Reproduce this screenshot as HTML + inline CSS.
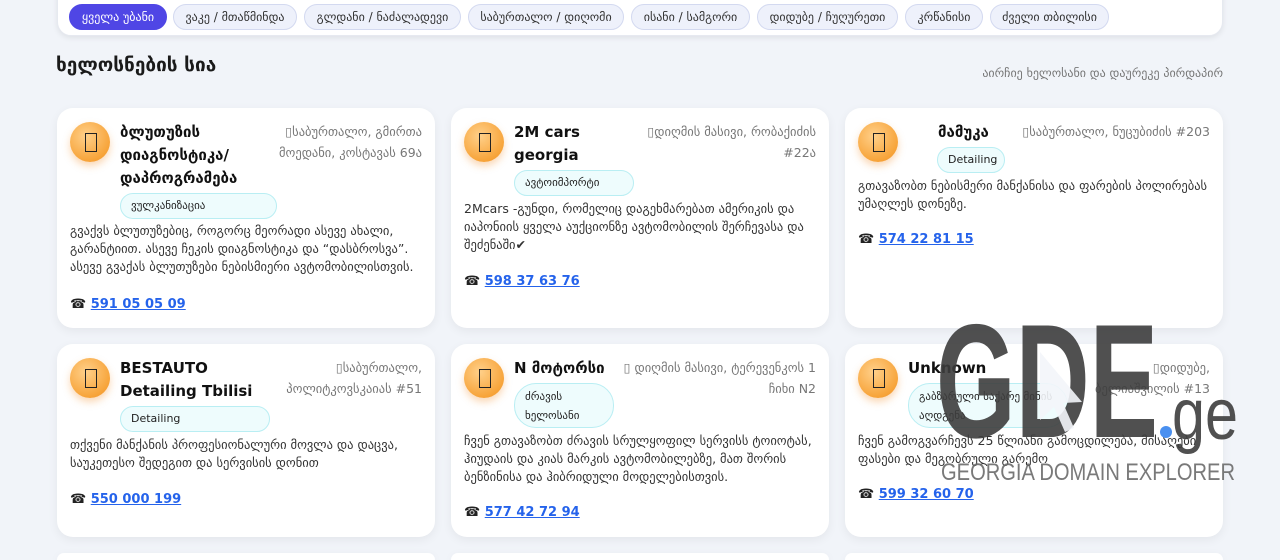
<!DOCTYPE html>
<html><head><meta charset="utf-8"><style>
*{box-sizing:border-box;margin:0;padding:0}
html,body{width:1280px;height:560px;overflow:hidden}
body{background:#f1f4f9;font-family:"DejaVu Sans","Liberation Sans",sans-serif;color:#222;position:relative}
.bar{position:absolute;left:57px;top:-20px;width:1166px;height:56px;background:#fff;border-radius:14px;box-shadow:0 2px 6px rgba(0,0,0,.08);border:1px solid #e6e9f0}
.chip{position:absolute;top:4px;height:26px;border-radius:13px;background:#eef1fb;border:1px solid #d3d9f0;font-size:12px;line-height:24px;text-align:center;color:#333}
.chip.on{background:#4f46e5;border-color:#4f46e5;color:#fff}
h2{position:absolute;left:56px;top:54px;font-size:19px;font-weight:bold;color:#1a1a1a}
.sub{position:absolute;right:57px;top:66px;font-size:12px;color:#777}
.card{position:absolute;width:378px;background:#fff;border-radius:16px;box-shadow:0 3px 10px rgba(0,0,0,.06)}
.av{position:absolute;left:13px;top:14px;width:40px;height:40px;border-radius:50%;background:radial-gradient(circle at 40% 35%,#ffd08a,#f7a43a 70%,#ef8f25);box-shadow:0 4px 8px rgba(240,140,40,.35)}
.av:after{content:"";position:absolute;left:15px;top:11px;width:10px;height:17px;border:1.3px solid #222}
.tt{position:absolute;left:63px;top:13px;font-size:15px;font-weight:bold;line-height:23px;color:#111}
.ad{position:absolute;right:13px;top:13px;font-size:12.5px;line-height:21px;color:#777;text-align:right}
.tag{position:absolute;left:63px;height:26px;border-radius:13px;background:#eefcfd;border:1px solid #b9eef3;font-size:11px;line-height:24px;padding-left:10px;color:#222}
.ds{position:absolute;left:13px;right:13px;font-size:12.5px;line-height:18px;color:#333}
.ph{position:absolute;left:13px;font-size:13px;font-weight:bold}
.ph a{color:#2563eb;text-decoration:underline}
</style></head><body>
<div class="bar"></div>
<div class="chip on" style="left:69px;width:98px">ყველა უბანი</div>
<div class="chip" style="left:173px;width:124px">ვაკე / მთაწმინდა</div>
<div class="chip" style="left:304px;width:157px">გლდანი / ნაძალადევი</div>
<div class="chip" style="left:468px;width:156px">საბურთალო / დიღომი</div>
<div class="chip" style="left:631px;width:119px">ისანი / სამგორი</div>
<div class="chip" style="left:757px;width:141px">დიდუბე / ჩუღურეთი</div>
<div class="chip" style="left:905px;width:78px">კრწანისი</div>
<div class="chip" style="left:990px;width:119px">ძველი თბილისი</div>
<h2>ხელოსნების სია</h2>
<div class="sub">აირჩიე ხელოსანი და დაურეკე პირდაპირ</div>

<div class="card" style="left:57px;top:108px;height:220px">
<div class="av"></div>
<div class="tt" style="width:170px">ბლუთუზის<br>დიაგნოსტიკა/<br>დაპროგრამება</div>
<div class="ad">▯საბურთალო, გმირთა<br>მოედანი, კოსტავას 69ა</div>
<div class="tag" style="top:85px;width:157px">ვულკანიზაცია</div>
<div class="ds" style="top:114px">გვაქვს ბლუთუზებიც, როგორც მეორადი ასევე ახალი, გარანტიით. ასევე ჩეკის დიაგნოსტიკა და “დასბროსვა”. ასევე გვაქას ბლუთუზები ნებისმიერი ავტომობილისთვის.</div>
<div class="ph" style="top:189px">☎ <a>591 05 05 09</a></div>
</div>

<div class="card" style="left:451px;top:108px;height:220px">
<div class="av"></div>
<div class="tt">2M cars<br>georgia</div>
<div class="ad">▯დიღმის მასივი, რობაქიძის<br>#22ა</div>
<div class="tag" style="top:62px;width:120px">ავტოიმპორტი</div>
<div class="ds" style="top:92px">2Mcars -გუნდი, რომელიც დაგეხმარებათ ამერიკის და იაპონიის ყველა აუქციონზე ავტომობილის შერჩევასა და შეძენაში✔</div>
<div class="ph" style="top:166px">☎ <a>598 37 63 76</a></div>
</div>

<div class="card" style="left:845px;top:108px;height:220px">
<div class="av"></div>
<div class="tt" style="left:93px">მამუკა</div>
<div class="ad">▯საბურთალო, ნუცუბიძის #203</div>
<div class="tag" style="top:39px;left:92px;width:68px">Detailing</div>
<div class="ds" style="top:69px">გთავაზობთ ნებისმერი მანქანისა და ფარების პოლირებას უმაღლეს დონეზე.</div>
<div class="ph" style="top:124px">☎ <a>574 22 81 15</a></div>
</div>

<div class="card" style="left:57px;top:344px;height:193px">
<div class="av"></div>
<div class="tt">BESTAUTO<br>Detailing Tbilisi</div>
<div class="ad">▯საბურთალო,<br>პოლიტკოვსკაიას #51</div>
<div class="tag" style="top:62px;width:150px">Detailing</div>
<div class="ds" style="top:92px">თქვენი მანქანის პროფესიონალური მოვლა და დაცვა, საუკეთესო შედეგით და სერვისის დონით</div>
<div class="ph" style="top:148px">☎ <a>550 000 199</a></div>
</div>

<div class="card" style="left:451px;top:344px;height:193px">
<div class="av"></div>
<div class="tt">N მოტორსი</div>
<div class="ad">▯ დიღმის მასივი, ტერევენკოს 1<br>ჩიხი N2</div>
<div class="tag" style="top:39px;width:100px;height:45px;line-height:19px;padding-top:3px;border-radius:22px">ძრავის<br>ხელოსანი</div>
<div class="ds" style="top:88px">ჩვენ გთავაზობთ ძრავის სრულყოფილ სერვისს ტოიოტას, ჰიუდაის და კიას მარკის ავტომობილებზე, მათ შორის ბენზინისა და ჰიბრიდული მოდელებისთვის.</div>
<div class="ph" style="top:161px">☎ <a>577 42 72 94</a></div>
</div>

<div class="card" style="left:845px;top:344px;height:193px">
<div class="av"></div>
<div class="tt">Unknown</div>
<div class="ad">▯დიდუბე,<br>ბელიაშვილის #13</div>
<div class="tag" style="top:39px;width:160px;height:45px;line-height:19px;padding-top:3px;border-radius:22px">გაბზარული საქარე მინის<br>აღდგენა</div>
<div class="ds" style="top:88px">ჩვენ გამოგვარჩევს 25 წლიანი გამოცდილება, მისაღები ფასები და მეგობრული გარემო</div>
<div class="ph" style="top:143px">☎ <a>599 32 60 70</a></div>
</div>

<div class="card" style="left:57px;top:553px;height:7px;border-radius:16px 16px 0 0"></div>
<div class="card" style="left:451px;top:553px;height:7px;border-radius:16px 16px 0 0"></div>
<div class="card" style="left:845px;top:553px;height:7px;border-radius:16px 16px 0 0"></div>

<svg style="position:absolute;left:0;top:0" width="1280" height="560">
<g fill="#3d3d3d" fill-opacity="0.9">
<text x="936" y="437" font-family="Liberation Sans Narrow, Liberation Sans, sans-serif" font-weight="bold" font-size="162" textLength="222" lengthAdjust="spacingAndGlyphs">GDE</text>
<text x="1172" y="439" font-family="Liberation Sans, sans-serif" font-size="72" textLength="66" lengthAdjust="spacingAndGlyphs">ge</text>
</g>
<polygon points="1040,352 1040,420 1054,407 1065,432 1074,428 1063,403 1082,402" fill="#f3f5f9" opacity="0.9"/>
<circle cx="1166" cy="432" r="6" fill="#4a90f0"/>
<text x="941" y="480" font-family="Liberation Sans, sans-serif" font-size="24" fill="#6a6a6a" fill-opacity="0.9" textLength="294" lengthAdjust="spacingAndGlyphs">GEORGIA DOMAIN EXPLORER</text>
</svg>
</body></html>
